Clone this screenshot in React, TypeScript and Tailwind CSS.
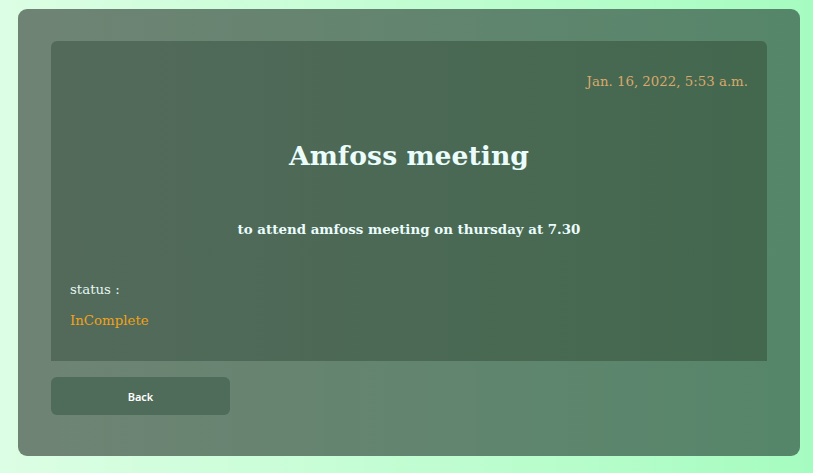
export default function App() {
  const serif = { fontFamily: '"DejaVu Serif", serif' };
  return (
    <div className="w-[813px] h-[473px] bg-gradient-to-r from-[#dcfee4] to-[#a5fcc0] pt-[9px] px-[18px]" style={serif}>
      <div className="w-[782px] h-[447px] rounded-[9px] bg-gradient-to-r from-[#6f8374] to-[#55866a] pt-[32px] px-[33px] flex flex-col">
        <div className="w-[716px] h-[320px] rounded-t-[6px] bg-gradient-to-r from-[#536a5b] to-[#43684e] flex flex-col px-[19px]">
          <div className="text-right text-[13.33px] text-[#d9a86c] mt-[33px] leading-[16px]">Jan. 16, 2022, 5:53 a.m.</div>
          <h1 className="text-center font-bold text-[26.67px] text-[#eafcfb] mt-[50px] leading-[32px]">Amfoss meeting</h1>
          <p className="text-center font-bold text-[13.4px] text-[#eafcfb] mt-[49px] leading-[16px]">to attend amfoss meeting on thursday at 7.30</p>
          <p className="text-[13.33px] text-[#e4f6f2] mt-[45px] leading-[16px]">status :</p>
          <p className="text-[13.33px] text-[#f0a21a] mt-[15px] leading-[16px]">InComplete</p>
        </div>
        <button
          className="mt-[16px] w-[179px] h-[38px] rounded-[6px] bg-[#4f6b5a] text-white text-[11px] font-semibold pt-[2px]"
          style={{ fontFamily: '"Noto Sans", sans-serif' }}
        >
          Back
        </button>
      </div>
    </div>
  );
}
